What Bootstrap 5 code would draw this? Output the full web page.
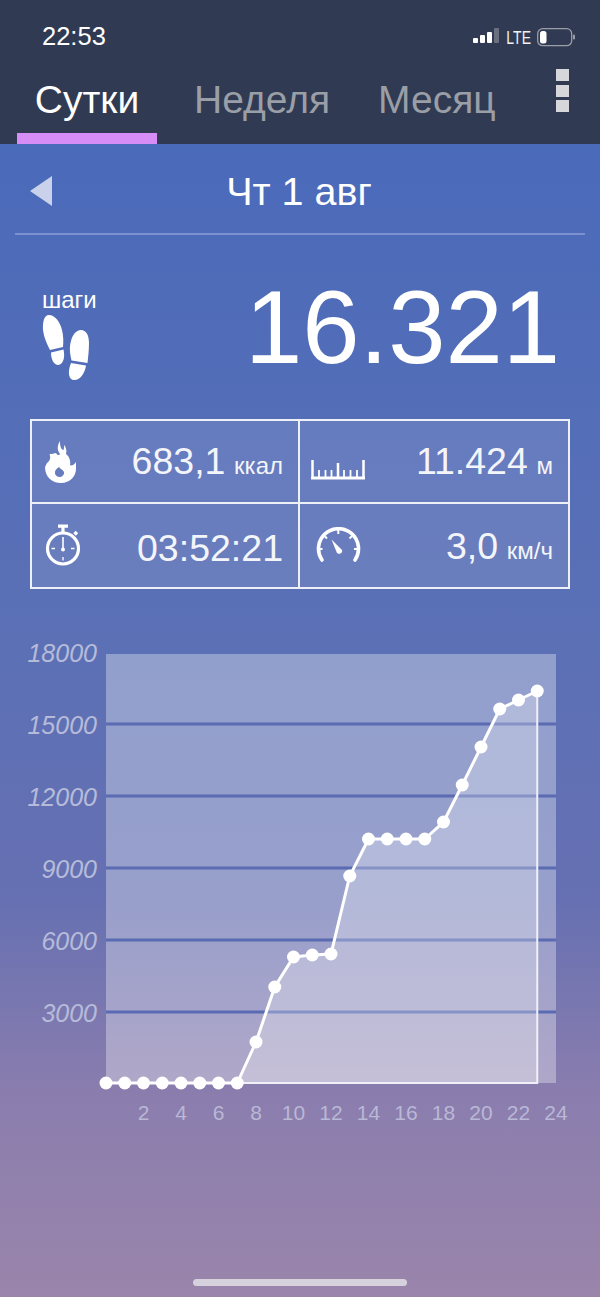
<!DOCTYPE html>
<html lang="ru">
<head>
  <meta charset="UTF-8" />
  <meta name="viewport" content="width=device-width, initial-scale=1.0"/>
  <title>Шаги</title>
  <link href="https://cdn.jsdelivr.net/npm/bootstrap@5.3.0/dist/css/bootstrap.min.css" rel="stylesheet">
  <style>
    html, body { height: 1297px; overflow: hidden; }
    body {
      font-family: "Liberation Sans", Arial, sans-serif;
      color: #fff;
      background: linear-gradient(180deg, #4a6aba 144px, #5a70b6 600px, #6670b2 900px, #8a7dae 1090px, #9a85ab 1297px);
    }
    .top-head { height: 144px; background: #303a52; }
    .status-row { height: 69px; padding: 23px 25px 0 42px; }
    .clock { font-size: 25.5px; line-height: 26px; }
    .status-icons { margin-top: 5px; }
    .lte { display: inline-block; font-size: 14px; line-height: 16px; color: #f2f2f2; transform: scaleY(1.25); margin: 0 6px 0 7px; }
    .tab-row { height: 75px; padding-left: 17px; }
    .tab-item { font-size: 39px; line-height: 44px; padding-top: 9px; color: #9a9ea6; text-align: center; }
    .tab-on { width: 140px; color: #fff; border-bottom: 11px solid #d68df5; height: 75px; }
    .tab-week { margin-left: 37px; }
    .tab-month { margin-left: 48px; }
    .more-dots { margin-left: 60px; gap: 3.5px; }
    .more-dots i { display: block; width: 13px; height: 12px; background: #d6d7da; }
    .date-row { height: 91px; margin: 0 15px; border-bottom: 2px solid #7a90d0; padding: 5px 15px 0; }
    .date-text { font-size: 39.5px; line-height: 44px; }
    .back-arrow { width: 22px; height: 30px; background: #c9d2ea; clip-path: polygon(100% 0, 100% 100%, 0 50%); }
    .hero-row { height: 184px; padding: 53px 40px 0 42px; }
    .steps-label { font-size: 24px; line-height: 24px; margin-bottom: 3px; }
    .steps-num { font-size: 103px; line-height: 110px; margin-top: -15px; }
    .stats-box { width: 540px; margin-left: 30px; border: 2px solid #eef0f8; background: rgba(255,255,255,.1); }
    .stat-cell { height: 83px; padding: 0 15px 0 13px; }
    .stat-cell.line-r { border-right: 2px solid #eef0f8; }
    .stat-cell.line-b { border-bottom: 2px solid #eef0f8; }
    .stat-val { font-size: 37.5px; line-height: 44px; color: #f4f5fa; padding-top: 3px; }
    .stat-low .stat-val { padding-top: 5px; }
    .stat-unit { font-size: 24px; margin-left: 2px; color: #f4f5fa; }
    .chart-wrap { height: 544px; margin-top: 20px; }
    .y-lab { font: italic 25px "Liberation Sans", Arial, sans-serif; fill: #b6bbda; }
    .x-lab { font: 21px "Liberation Sans", Arial, sans-serif; fill: #b9b8d6; }
    .home-bar { width: 214px; height: 7px; border-radius: 4px; background: #d6d2dd; margin: 126px auto 0; }
    .ruler-ico { margin-left: -2px; margin-top: 14px; }
    .gauge-ico { margin-left: 3px; }
  </style>
</head>
<body>

  <div class="top-head">
    <div class="status-row d-flex justify-content-between align-items-start">
      <div class="clock">22:53</div>
      <div class="status-icons d-flex align-items-center">
        <svg width="26" height="20" viewBox="0 0 26 20">
          <rect x="0" y="10" width="5" height="5" rx="1" fill="#fff"/>
          <rect x="7" y="7" width="5" height="8" rx="1" fill="#fff"/>
          <rect x="14" y="4" width="5" height="11" rx="1" fill="#fff"/>
          <rect x="21" y="0" width="5" height="15" rx="1" fill="#6a7080"/>
        </svg>
        <span class="lte">LTE</span>
        <svg width="38" height="20" viewBox="0 0 38 20">
          <rect x=".7" y=".7" width="34" height="17" rx="5" fill="none" stroke="#9a9ea8" stroke-width="1.3"/>
          <rect x="3" y="3" width="6.500" height="12.500" rx="2.500" fill="#fff"/>
          <rect x="36" y="6.500" width="2" height="5" rx="1" fill="#9a9ea8"/>
        </svg>
      </div>
    </div>
    <div class="tab-row d-flex align-items-start">
      <div class="tab-item tab-on">Сутки</div>
      <div class="tab-item tab-week">Неделя</div>
      <div class="tab-item tab-month">Месяц</div>
      <div class="more-dots d-flex flex-column"><i></i><i></i><i></i></div>
    </div>
  </div>

  <div class="date-row d-flex align-items-center">
    <div class="back-arrow"></div>
    <div class="date-text flex-grow-1 text-center pe-4">Чт 1 авг</div>
  </div>

  <div class="hero-row d-flex justify-content-between align-items-start">
    <div>
      <div class="steps-label">шаги</div>
      <svg width="48" height="66" viewBox="-1 0 48 66" class="d-block">
        <path d="M6 0C12 0 17 7 19 15C20.500 21 20.500 27 20 32L7 35C4 29 1 23 0 15C-.5 7 1 0 6 0Z" fill="#fff"/>
        <path d="M8 37.500L20.500 34.500C22 41 21 49 15.500 50C10.500 50 8 44 8 37.500Z" fill="#fff"/>
        <path d="M38 15C43 15 46 20 46 28C46 36 45 43 44.500 48L28.500 45.500C27 38 26 33 28 26C29.500 20 33 15 38 15Z" fill="#fff"/>
        <path d="M28 48L43 50.500C42 57 38 65 31 65C26 65 24 58 28 48Z" fill="#fff"/>
      </svg>
    </div>
    <div class="steps-num">16.321</div>
  </div>

  <div class="stats-box row g-0">
    <div class="col-6 stat-cell line-r line-b d-flex align-items-center justify-content-between">
      <svg width="32" height="42" viewBox="0 0 32 42">
        <path fill-rule="evenodd" d="M15 0C12 5 12 9 15 13C14 15 12 14 11 12C8 13 5 13 4.500 13C6 17 5 20 2 22L0 26C0 36 7 42 16 42C25 42 31 35 31 28L31 21C29 24 27 25 25 24C26 20 24 15 21 13C22 10 21 6 19 4C19 7 19 9 18 9C15 7 15 3 15 0ZM14 26C11 28 9.500 30 10 32.500C10.500 35 13 36.500 15.500 36C18 35.500 19.500 33 19 31C18 28.500 15.500 28.500 14 26Z" fill="#fff"/>
      </svg>
      <div class="stat-val">683,1<span class="stat-unit">&nbsp;ккал</span></div>
    </div>
    <div class="col-6 stat-cell line-b d-flex align-items-center justify-content-between">
      <svg width="54" height="22" viewBox="0 0 54 22" class="ruler-ico">
        <path d="M1.500 2V20M27 5V20M52.500 2V20" fill="none" stroke="#fff" stroke-width="2.500"/>
        <path d="M8 20V12M14.500 20V12M20.500 20V12M33 20V12M39.500 20V12M46 20V12" fill="none" stroke="#fff" stroke-width="1.800"/>
        <path d="M0 20H54" fill="none" stroke="#fff" stroke-width="3"/>
      </svg>
      <div class="stat-val">11.424<span class="stat-unit">&nbsp;м</span></div>
    </div>
    <div class="col-6 stat-cell stat-low line-r d-flex align-items-center justify-content-between">
      <svg width="38" height="44" viewBox="0 0 38 44">
        <path d="M13 2.200H23M18 3V8M29.500 8L32 10.500" fill="none" stroke="#fff" stroke-width="3.200"/>
        <circle cx="18" cy="24.500" r="15.500" fill="none" stroke="#fff" stroke-width="3.200"/>
        <path d="M18 13V25" stroke="#fff" stroke-width="1.600"/>
        <circle cx="18" cy="25.500" r="2" fill="#fff"/>
        <path d="M18 33V36.500M6.500 24.500H10M26 24.500H29.500" stroke="#fff" stroke-width="1.300"/>
      </svg>
      <div class="stat-val">03:52:21</div>
    </div>
    <div class="col-6 stat-cell stat-low d-flex align-items-center justify-content-between">
      <svg width="46" height="38" viewBox="0 0 46 38" class="gauge-ico">
        <path d="M6 33A20 20 0 1 1 39 33" fill="none" stroke="#fff" stroke-width="3.600" stroke-linecap="round"/>
        <path d="M22.300 3V7M8.500 9L11 11.500M36 9L33.500 11.500M3 22H6.500M41.500 22H38" stroke="#fff" stroke-width="2"/>
        <path d="M15.500 12.500L26 23C27 26 23 28 21 26Z" fill="#fff"/>
      </svg>
      <div class="stat-val">3,0<span class="stat-unit">&nbsp;км/ч</span></div>
    </div>
  </div>

  <div class="chart-wrap">
    <svg id="stepsChart" width="600" height="544" viewBox="0 609 600 544" class="d-block"></svg>
  </div>

  <div class="home-bar"></div>

  <script>
    // y pixel of every hourly point, hours 0..23
    const stepsY = [1083,1083,1083,1083,1083,1083,1083,1083,1042,987,957,955,954,876,839,839,839,839,822,785,747,709,700,691];
    const hourX = h => 106 + h * 18.75;

    let svg = '<rect x="106" y="654" width="450" height="429" fill="#fff" opacity=".33"/>';
    [724, 796, 868, 940, 1012].forEach(y => {
      svg += `<rect x="106" y="${y - 1.5}" width="450" height="3" fill="#5a6bb2"/>`;
    });

    const line = stepsY.map((y, h) => `${hourX(h)},${y}`).join(' ');
    svg += `<polygon points="${line} ${hourX(23)},1083 ${hourX(7)},1083" fill="#fff" opacity=".27"/>`;
    svg += `<polyline points="${hourX(7)},1083 ${hourX(23)},1083 ${hourX(23)},691" fill="none" stroke="#f0f0f6" stroke-width="2"/>`;
    svg += `<polyline points="${line}" fill="none" stroke="#fff" stroke-width="3"/>`;
    stepsY.forEach((y, h) => { svg += `<circle cx="${hourX(h)}" cy="${y}" r="6.500" fill="#fff"/>`; });

    [18000, 15000, 12000, 9000, 6000, 3000].forEach((v, i) => {
      svg += `<text class="y-lab" x="97" y="${662 + i * 72}" text-anchor="end">${v}</text>`;
    });
    for (let h = 2; h <= 24; h += 2) {
      svg += `<text class="x-lab" x="${hourX(h)}" y="1120" text-anchor="middle">${h}</text>`;
    }
    document.getElementById('stepsChart').innerHTML = svg;
  </script>
  <script src="https://cdn.jsdelivr.net/npm/bootstrap@5.3.0/dist/js/bootstrap.bundle.min.js"></script>
</body>
</html>
